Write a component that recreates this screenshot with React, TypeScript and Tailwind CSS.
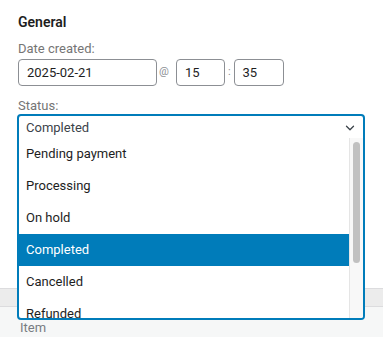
import { ChevronDown } from "lucide-react";

const options = ["Pending payment", "Processing", "On hold", "Completed", "Cancelled", "Refunded"];

const App = () => {
	return (
		<div className="relative h-[337px] w-[383px] overflow-hidden bg-white font-['Roboto',sans-serif] text-[13px] text-[#1e1e1e]">
			<div className="flex h-[288px] flex-col px-[18px] pt-[12px]">
				<h3 className="text-[14px] font-semibold leading-[20px]">General</h3>
				<label className="mt-[8px] leading-[18px] text-[#757575]">Date created:</label>
				<div className="mt-[1px] flex items-center">
					<div className="flex h-[27px] w-[139px] items-center rounded-[4px] border border-[#8c8f94] px-[8px]">
						2025-02-21
					</div>
					<span className="ml-[2px] mr-[7px] text-[11px] text-[#8c8f94]">@</span>
					<div className="flex h-[27px] w-[49px] items-center rounded-[4px] border border-[#8c8f94] px-[8px]">
						15
					</div>
					<span className="ml-[3px] mr-[3px] text-[11px] text-[#8c8f94]">:</span>
					<div className="flex h-[27px] w-[50px] items-center rounded-[4px] border border-[#8c8f94] px-[8px]">
						35
					</div>
				</div>
				<label className="mt-[11px] leading-[18px] text-[#757575]">Status:</label>
			</div>
			<div className="border-t border-[#dcdcde] bg-[#f0f0f1]">
				<div className="h-[18px] border-b border-[#dcdcde] bg-[#ececec]" />
				<div className="h-[30px] bg-[#f6f7f7] px-[20px] pt-[12px] leading-[18px] text-[#787c82]">Item</div>
			</div>
			<div className="absolute left-[17px] top-[114px] flex h-[206px] w-[348px] flex-col overflow-hidden rounded-[4px] border-2 border-[#007cba] bg-white">
				<div className="flex h-[22px] shrink-0 items-center justify-between pl-[7px] pr-[6px] pt-[2px] text-[#3c434a]">
					<span>Completed</span>
					<ChevronDown size={14} strokeWidth={2.25} className="text-[#3c434a]" />
				</div>
				<div className="flex min-h-0 flex-1">
					<ul className="flex-1">
						{options.map((o) => (
							<li
								key={o}
								className={`flex h-[32px] items-center pl-[7px] ${o === "Completed" ? "bg-[#007cba] text-white" : ""}`}
							>
								{o}
							</li>
						))}
					</ul>
					<div className="w-[14px] shrink-0 border-l border-[#e5e5e5] bg-[#f8f8f8] px-[3px] pt-[4px]">
						<div className="h-[121px] rounded-full bg-[#c1c1c1]" />
					</div>
				</div>
			</div>
		</div>
	);
};

export default App;
